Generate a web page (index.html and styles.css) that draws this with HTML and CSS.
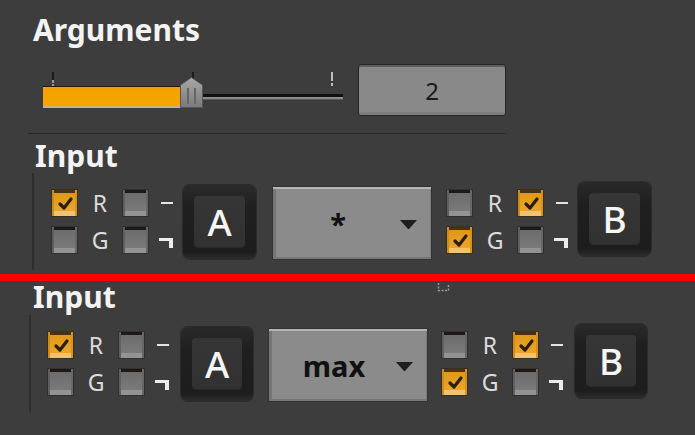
FILE: index.html
```html
<!DOCTYPE html>
<html>
<head>
<meta charset="utf-8">
<link rel="stylesheet" href="styles.css">
</head>
<body>
<div class="panel panel-top">
  <h2 class="title">Arguments</h2>
  <div class="slider-row">
    <div class="slider">
      <div class="tick tick-a"></div>
      <div class="tick tick-b"></div>
      <div class="tick tick-c"></div>
      <div class="track"></div>
      <div class="fill"></div>
      <svg class="thumb" width="23" height="31" viewBox="0 0 23 31">
        <defs>
          <linearGradient id="tg" x1="0" y1="0" x2="0" y2="1">
            <stop offset="0" stop-color="#a8a8a8"/>
            <stop offset="1" stop-color="#7a7a7a"/>
          </linearGradient>
        </defs>
        <polygon points="0.5,8 11.5,0.5 22.5,8 22.5,30.5 0.5,30.5" fill="url(#tg)" stroke="#565656"/>
        <line x1="8" y1="11" x2="8" y2="27" stroke="#666" stroke-width="2"/>
        <line x1="15" y1="11" x2="15" y2="27" stroke="#666" stroke-width="2"/>
      </svg>
    </div>
    <div class="numbox">2</div>
  </div>
  <div class="sep"></div>
  <section class="input input-top">
    <h3 class="sec-title">Input</h3>
    <div class="io">
      <div class="channels">
        <span class="cb on"><svg viewBox="0 0 25 26"><path d="M8 14 L12 18 L19 9" /></svg></span>
        <span class="lbl">R</span>
        <span class="cb"></span>
        <span class="dash"></span>
        <span class="cb"></span>
        <span class="lbl">G</span>
        <span class="cb"></span>
        <span class="notsign"></span>
      </div>
      <div class="key"><div class="face">A</div></div>
      <div class="dropdown"><span class="dd-label">*</span><svg class="dd-arrow" width="17" height="9" viewBox="0 0 17 9"><polygon points="0,0 17,0 9,9 8,9"/></svg></div>
      <div class="channels">
        <span class="cb"></span>
        <span class="lbl">R</span>
        <span class="cb on"><svg viewBox="0 0 25 26"><path d="M8 14 L12 18 L19 9" /></svg></span>
        <span class="dash"></span>
        <span class="cb on"><svg viewBox="0 0 25 26"><path d="M8 14 L12 18 L19 9" /></svg></span>
        <span class="lbl">G</span>
        <span class="cb"></span>
        <span class="notsign"></span>
      </div>
      <div class="key key-b"><div class="face">B</div></div>
    </div>
  </section>
</div>
<div class="redline"></div>
<div class="panel panel-bottom">
  <section class="input input-bottom">
    <h3 class="sec-title">Input</h3>
    <div class="io">
      <div class="channels">
        <span class="cb on"><svg viewBox="0 0 25 26"><path d="M8 14 L12 18 L19 9" /></svg></span>
        <span class="lbl">R</span>
        <span class="cb"></span>
        <span class="dash"></span>
        <span class="cb"></span>
        <span class="lbl">G</span>
        <span class="cb"></span>
        <span class="notsign"></span>
      </div>
      <div class="key"><div class="face">A</div></div>
      <div class="dropdown"><span class="dd-label">max</span><svg class="dd-arrow" width="17" height="9" viewBox="0 0 17 9"><polygon points="0,0 17,0 9,9 8,9"/></svg></div>
      <div class="channels">
        <span class="cb"></span>
        <span class="lbl">R</span>
        <span class="cb on"><svg viewBox="0 0 25 26"><path d="M8 14 L12 18 L19 9" /></svg></span>
        <span class="dash"></span>
        <span class="cb on"><svg viewBox="0 0 25 26"><path d="M8 14 L12 18 L19 9" /></svg></span>
        <span class="lbl">G</span>
        <span class="cb"></span>
        <span class="notsign"></span>
      </div>
      <div class="key key-b"><div class="face">B</div></div>
    </div>
  </section>
</div>
<svg class="cursor-mark" width="13" height="10" viewBox="0 0 13 10"><path d="M1.5 1 V8.5 H11.5 V2" fill="none" stroke="#9a9a9a" stroke-width="1.5" stroke-dasharray="2 1.5"/></svg>
</body>
</html>
```
FILE: styles.css
```css
html, body {
  margin: 0;
  padding: 0;
}
body {
  position: relative;
  width: 695px;
  height: 435px;
  overflow: hidden;
  background: #3d3d3d;
  font-family: "Noto Sans", "Open Sans", sans-serif;
  color: #e8e8e8;
}
.panel-top {
  height: 274px;
  display: flex;
  flex-direction: column;
}
.title {
  margin: 15px 0 0 33px;
  font-size: 30px;
  line-height: 30px;
  font-weight: 700;
  color: #f3f3f3;
}
.slider-row {
  display: flex;
  gap: 15px;
  margin: 19px 0 0 43px;
  height: 52px;
}
.slider {
  position: relative;
  width: 300px;
  height: 44px;
  margin-top: 8px;
}
.fill {
  position: absolute;
  left: 0;
  top: 14px;
  width: 139px;
  height: 22px;
  background: linear-gradient(#231a0c 0 1px, #f4a100 1px, #f7a500 calc(100% - 2px), #c8b28a calc(100% - 2px));
}
.track {
  position: absolute;
  left: 138px;
  right: 0;
  top: 22px;
  height: 8px;
  background: linear-gradient(#111 0 3px, #8c8c8c 3px 5px, #575757 5px 6px, #3d3d3d 6px);
}
.thumb {
  position: absolute;
  left: 137px;
  top: 5px;
  display: block;
}
.tick {
  position: absolute;
  top: 0;
  width: 2px;
  height: 14px;
}
.tick-a {
  left: 9px;
  background: linear-gradient(#1a1a1a 0 8px, #9a9a9a 8px 11px, transparent 11px 12px, #9a9a9a 12px);
}
.tick-b {
  left: 149px;
  height: 7px;
  background: #1a1a1a;
}
.tick-c {
  left: 288px;
  background: linear-gradient(#bdbdbd 0 9px, transparent 9px 11px, #bdbdbd 11px);
}
.numbox {
  width: 148px;
  height: 52px;
  box-sizing: border-box;
  background: #898989;
  border: 1px solid #262626;
  border-radius: 3px;
  box-shadow: inset 0 2px 0 #5e5e5e, inset 0 -3px 0 #7e7e7e;
  display: flex;
  align-items: center;
  justify-content: center;
  font-size: 24px;
  color: #1b1b1b;
}
.sep {
  margin: 17px 0 0 28px;
  width: 478px;
  height: 1px;
  background: #272727;
}
.sec-title {
  margin: 0;
  font-size: 30px;
  line-height: 30px;
  font-weight: 700;
  color: #f3f3f3;
}
.input-top .sec-title {
  margin: 7px 0 0 35px;
}
.input-bottom .sec-title {
  margin: 1px 0 0 33px;
}
.io {
  display: flex;
  align-items: center;
  height: 97px;
  border-left: 2px solid #2e2e2e;
}
.input-top .io {
  margin: 2px 0 0 32px;
  padding-left: 18px;
}
.input-bottom .io {
  margin: 3px 0 0 29px;
  padding-left: 17px;
}
.channels {
  display: grid;
  grid-template-columns: 25px 46px 25px 35px;
  grid-template-rows: 26px 26px;
  row-gap: 11px;
  align-items: center;
}
.cb {
  display: block;
  width: 25px;
  height: 26px;
  box-sizing: border-box;
  background: linear-gradient(#1c1a19 0 3px, #6c6c6c 3px, #7a7a7a 82%, #939393 82%);
  box-shadow: inset 2px 0 0 #5f5f5f, inset -2px 0 0 #676767, 0 0 0 1px #342e2b;
}
.cb.on {
  background: linear-gradient(#4a3110 0 3px, #df9818 3px, #eba52c 80%, #f2c274 80%);
  box-shadow: inset 2px 0 0 #d08c18, inset -2px 0 0 #d8921a, 0 0 0 1px #3a2e22;
}
.cb svg {
  display: block;
  width: 25px;
  height: 26px;
}
.cb svg path {
  fill: none;
  stroke: #2a1e0e;
  stroke-width: 3.2;
  stroke-linecap: round;
  stroke-linejoin: round;
}
.lbl {
  text-align: center;
  font-size: 23px;
  line-height: 26px;
  font-weight: 400;
  color: #dcdcdc;
}
.dash {
  width: 12px;
  height: 2px;
  margin-left: 13px;
  background: #e4e4e4;
}
.notsign {
  align-self: start;
  width: 14px;
  height: 10px;
  margin: 11px 0 0 11px;
  box-sizing: border-box;
  border-top: 3px solid #ececec;
  border-right: 4px solid #ececec;
}
.key {
  width: 73px;
  height: 74px;
  box-sizing: border-box;
  padding: 11px 11px 12px;
  border-radius: 7px;
  background: linear-gradient(#2a2a2a, #1f1f1f 30%, #1d1d1d 90%, #2c2c2c);
  box-shadow: 0 0 0 1px #2b2b2b;
}
.key-b {
  margin-bottom: 5px;
}
.input-bottom .key-b {
  margin-left: 3px;
}
.input-bottom .key {
  margin-left: 2px;
  width: 72px;
}
.face {
  width: 100%;
  height: 100%;
  border-radius: 4px;
  background: linear-gradient(#363636, #313131);
  box-shadow: 0 1px 0 #2a2a2a;
  display: flex;
  align-items: center;
  justify-content: center;
  font-size: 37px;
  line-height: 1;
  font-weight: 500;
  color: #f5f5f5;
}
.dropdown {
  width: 158px;
  height: 72px;
  margin: 3px 16px 0 17px;
  box-sizing: border-box;
  display: flex;
  align-items: center;
  background: #8b8b8b;
  border-top: 2px solid #b6b6b6;
  box-shadow: inset 3px 0 0 #767676, inset -1px 0 0 #7c7c7c, inset 0 -2px 0 #777, 0 0 0 1px #333;
}
.input-bottom .dropdown {
  margin-left: 16px;
  margin-right: 15px;
}
.dd-label {
  flex: 1;
  padding-left: 3px;
  text-align: center;
  font-size: 29px;
  line-height: 70px;
  font-weight: 700;
  color: #111;
}
.dd-arrow {
  display: block;
  margin-right: 14px;
  fill: #1e1e1e;
}
.redline {
  height: 7px;
  background: #ff0000;
}
.cursor-mark {
  position: absolute;
  left: 437px;
  top: 282px;
}
```
